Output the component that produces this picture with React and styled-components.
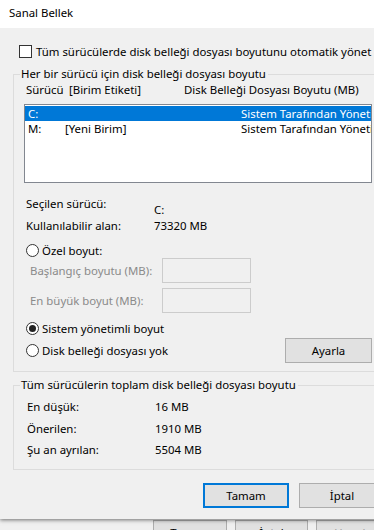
import React from 'react';
import styled, { createGlobalStyle } from 'styled-components';

const GlobalStyle = createGlobalStyle`
    html, body {
        margin: 0;
        padding: 0;
        background: #f0f0f0;
        overflow: hidden;
    }
    body {
        font-family: 'Noto Sans', 'Segoe UI', sans-serif;
        font-size: 11.4px;
        color: #000;
    }
`;

const drives = [
    { letter: 'C:', label: '', size: 'Sistem Tarafından Yönetilen', selected: true },
    { letter: 'M:', label: '[Yeni Birim]', size: 'Sistem Tarafından Yönetilen', selected: false },
];

const totals = [
    ['En düşük:', '16 MB'],
    ['Önerilen:', '1910 MB'],
    ['Şu an ayrılan:', '5504 MB'],
];

const App = () => {
    return (
        <Screen>
            <GlobalStyle />
            <Dialog>
                <TitleBar>Sanal Bellek</TitleBar>
                <Body>
                    <CheckRow>
                        <CheckBox />
                        Tüm sürücülerde disk belleği dosyası boyutunu otomatik yönet
                    </CheckRow>

                    <Group>
                        <Legend>Her bir sürücü için disk belleği dosyası boyutu</Legend>
                        <ListHeader>
                            <Col w={43}>Sürücü</Col>
                            <Col w={115}>[Birim Etiketi]</Col>
                            <Col>Disk Belleği Dosyası Boyutu (MB)</Col>
                        </ListHeader>
                        <DriveList>
                            {drives.map(d => (
                                <DriveRow key={d.letter} selected={d.selected}>
                                    <Col w={37}>{d.letter}</Col>
                                    <Col w={176}>{d.label}</Col>
                                    <Col>{d.size}</Col>
                                </DriveRow>
                            ))}
                        </DriveList>

                        <InfoRow gap={13}>
                            <Col w={128}>Seçilen sürücü:</Col>
                            <Col drop={6}>C:</Col>
                        </InfoRow>
                        <InfoRow gap={6}>
                            <Col w={128}>Kullanılabilir alan:</Col>
                            <Col>73320 MB</Col>
                        </InfoRow>

                        <RadioRow gap={9}>
                            <Radio />
                            Özel boyut:
                        </RadioRow>
                        <FieldRow gap={0}>
                            <FieldLabel>Başlangıç boyutu (MB):</FieldLabel>
                            <TextBox />
                        </FieldRow>
                        <FieldRow gap={5}>
                            <FieldLabel>En büyük boyut (MB):</FieldLabel>
                            <TextBox />
                        </FieldRow>

                        <RadioRow gap={8}>
                            <Radio checked />
                            Sistem yönetimli boyut
                        </RadioRow>
                        <LastRow>
                            <RadioRow gap={0}>
                                <Radio />
                                Disk belleği dosyası yok
                            </RadioRow>
                            <Button w={87}>Ayarla</Button>
                        </LastRow>
                    </Group>

                    <Group second>
                        <Legend>Tüm sürücülerin toplam disk belleği dosyası boyutu</Legend>
                        {totals.map(([label, value], i) => (
                            <TotalRow key={label} gap={i === 2 ? 5 : 6}>
                                <Col w={128}>{label}</Col>
                                <Col>{value}</Col>
                            </TotalRow>
                        ))}
                    </Group>

                    <Footer>
                        <Button w={86} primary>Tamam</Button>
                        <Button w={86}>İptal</Button>
                    </Footer>
                </Body>
            </Dialog>
            <ParentButtons>
                <Button w={74}>Tamam</Button>
                <Button w={73}>İptal</Button>
                <Button w={74} disabled>Uygula</Button>
            </ParentButtons>
        </Screen>
    );
};

const Screen = styled.div`
    width: 374px;
    height: 530px;
    overflow: hidden;
    background: #f0f0f0;
`;

const Dialog = styled.div`
    width: 397px;
    background: #f0f0f0;
    box-shadow: 0 1px 4px rgba(0, 0, 0, 0.55);
    position: relative;
    z-index: 1;
`;

const TitleBar = styled.div`
    height: 28px;
    background: #fff;
    padding-left: 9px;
    line-height: 26px;
    box-sizing: border-box;
`;

const Body = styled.div`
    padding: 17px 12px 11px 13px;
`;

const CheckRow = styled.label`
    display: flex;
    align-items: center;
    gap: 4px;
    height: 13px;
    margin-left: 6px;
    white-space: nowrap;
`;

const CheckBox = styled.span`
    flex: none;
    width: 11px;
    height: 11px;
    border: 1px solid #333;
    background: #fff;
`;

const Group = styled.fieldset`
    margin: ${p => (p.second ? '5px' : '8px')} 0 0;
    padding: 0 12px ${p => (p.second ? '11px' : '8px')} 10px;
    border: 1px solid #dcdcdc;
    min-width: 0;
`;

const Legend = styled.legend`
    padding: 0 2px 0 1px;
    margin-left: -4px;
    line-height: 16px;
    white-space: nowrap;
`;

const ListHeader = styled.div`
    display: flex;
    height: 16px;
    line-height: 16px;
    margin-left: 2px;
    white-space: nowrap;
`;

const Col = styled.span`
    flex: none;
    width: ${p => (p.w ? `${p.w}px` : 'auto')};
    padding-top: ${p => p.drop || 0}px;
    white-space: nowrap;
`;

const DriveList = styled.div`
    margin-top: 6px;
    height: 76px;
    border: 1px solid #828790;
    background: #fff;
    padding-top: 1px;
    box-sizing: content-box;
    overflow: hidden;
`;

const DriveRow = styled.div`
    display: flex;
    height: 15px;
    line-height: 15px;
    padding-left: 3px;
    background: ${p => (p.selected ? '#0078d7' : 'transparent')};
    color: ${p => (p.selected ? '#fff' : '#000')};
`;

const InfoRow = styled.div`
    display: flex;
    height: 16px;
    line-height: 16px;
    margin-top: ${p => p.gap}px;
    margin-left: 2px;
`;

const TotalRow = styled(InfoRow)`
    margin-left: 3px;
`;

const RadioRow = styled.label`
    display: flex;
    align-items: center;
    gap: 3px;
    height: 15px;
    margin-top: ${p => p.gap}px;
    margin-left: 2px;
    white-space: nowrap;
`;

const Radio = styled.span`
    flex: none;
    width: 11px;
    height: 11px;
    border: 1px solid #333;
    border-radius: 50%;
    background: #fff;
    display: flex;
    align-items: center;
    justify-content: center;
    &::after {
        content: '';
        display: ${p => (p.checked ? 'block' : 'none')};
        width: 7px;
        height: 7px;
        border-radius: 50%;
        background: #222;
    }
`;

const FieldRow = styled.div`
    display: flex;
    align-items: center;
    margin-top: ${p => p.gap}px;
    margin-left: 6px;
`;

const FieldLabel = styled.span`
    width: 132px;
    color: #8a8a8a;
    white-space: nowrap;
`;

const TextBox = styled.span`
    width: 87px;
    height: 23px;
    border: 1px solid #cccccc;
    background: #f0f0f0;
`;

const LastRow = styled.div`
    display: flex;
    align-items: center;
    justify-content: space-between;
    height: 25px;
    margin-top: 2px;
`;

const Button = styled.button`
    flex: none;
    width: ${p => p.w}px;
    height: 25px;
    padding: 0;
    font: inherit;
    color: ${p => (p.disabled ? '#a0a0a0' : '#000')};
    background: #e1e1e1;
    border: ${p => (p.primary ? '2px solid #0078d7' : '1px solid #adadad')};
    border-radius: 0;
`;

const Footer = styled.div`
    display: flex;
    justify-content: flex-end;
    gap: 10px;
    margin-top: 13px;
`;

const ParentButtons = styled.div`
    display: flex;
    gap: 8px;
    padding-left: 153px;
    margin-top: 1px;
`;

export default App;
